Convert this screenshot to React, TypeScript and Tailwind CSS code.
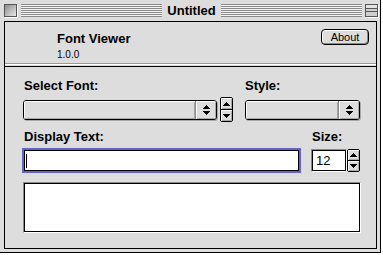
import React from "react";

const stripes =
  "bg-[repeating-linear-gradient(to_bottom,#8a8a8a_0px,#8a8a8a_1px,#f4f4f4_1px,#f4f4f4_2px)]";

const UpArrow = () => (
  <svg width="7" height="4" viewBox="0 0 7 4" shapeRendering="crispEdges">
    <path d="M3 0h1v1h-1zM2 1h3v1h-3zM1 2h5v1h-5zM0 3h7v1h-7z" fill="#000" />
  </svg>
);

const DownArrow = () => (
  <svg width="7" height="4" viewBox="0 0 7 4" shapeRendering="crispEdges">
    <path d="M0 0h7v1h-7zM1 1h5v1h-5zM2 2h3v1h-3zM3 3h1v1h-1z" fill="#000" />
  </svg>
);

const Popup = ({ width }: { width: string }) => (
  <div
    className={`${width} h-[20px] rounded-[3px] border border-black bg-[#dddddd] shadow-[1px_1px_0_#a8a8a8] flex overflow-hidden`}
  >
    <div className="flex-1 shadow-[inset_1px_1px_0_#ffffff,inset_-1px_-1px_0_#a8a8a8]" />
    <div className="w-[21px] border-l border-[#8a8a8a] flex flex-col items-center justify-center gap-[2px] shadow-[inset_1px_1px_0_#ffffff,inset_-1px_-1px_0_#a8a8a8]">
      <UpArrow />
      <DownArrow />
    </div>
  </div>
);

const Stepper = ({ height }: { height: string }) => (
  <div
    className={`w-[13px] ${height} border border-black rounded-[2px] bg-[#dddddd] flex flex-col overflow-hidden`}
  >
    <div className="flex-1 border-b border-black flex items-center justify-center shadow-[inset_1px_1px_0_#ffffff,inset_-1px_-1px_0_#a8a8a8]">
      <UpArrow />
    </div>
    <div className="flex-1 flex items-center justify-center shadow-[inset_1px_1px_0_#ffffff,inset_-1px_-1px_0_#a8a8a8]">
      <DownArrow />
    </div>
  </div>
);

export default function App() {
  return (
    <div className="w-[383px] h-[255px] bg-white text-black font-['Liberation_Sans',Arial,sans-serif]">
      <div className="w-[381px] h-[253px] bg-[#dddddd] border-r border-b border-black flex flex-col">
        {/* title bar */}
        <div className="h-[21px] shrink-0 flex items-center pl-[4px] pr-[2px]">
          <div className="w-[13px] h-[13px] border border-[#555555] shadow-[1px_1px_0_#ffffff] bg-[linear-gradient(135deg,#8c8c8c,#e8e8e8)]" />
          <div className={`flex-1 h-[13px] ml-[4px] ${stripes}`} />
          <span className="px-[5px] text-[13px] font-bold leading-[13px]">
            Untitled
          </span>
          <div className={`flex-1 h-[13px] mr-[3px] ${stripes}`} />
          <div className="w-[13px] h-[13px] border border-[#555555] shadow-[1px_1px_0_#ffffff] bg-[#cfcfcf] flex flex-col">
            <div className="h-[4px] border-b border-[#555555] bg-[#e4e4e4]" />
            <div className="h-[3px] border-b border-[#555555]" />
          </div>
        </div>

        {/* content */}
        <div className="flex-1 ml-[4px] mr-[3px] mb-[3px] border border-black flex flex-col">
          <div className="h-[42px] shrink-0 border-b border-[#9a9a9a] flex items-start justify-between pl-[52px] pr-[7px] pt-[7px]">
            <div className="mt-[2px]">
              <div className="text-[13px] font-bold leading-[15px]">
                Font Viewer
              </div>
              <div className="mt-[3px] text-[10px] leading-[12px]">1.0.0</div>
            </div>
            <button className="w-[48px] h-[16px] rounded-[4px] border border-black bg-[#dddddd] shadow-[inset_1px_1px_0_#ffffff,inset_-1px_-1px_0_#8a8a8a] text-[11px] leading-[14px]">
              About
            </button>
          </div>
          <div className="h-px bg-white shrink-0" />
          <div className="h-px shrink-0" />
          <div className="h-px bg-black shrink-0" />

          <div className="flex-1 pl-[18px] pt-[11px]">
            {/* font + style row */}
            <div className="flex">
              <div>
                <div className="ml-[1px] text-[13px] font-bold leading-[15px]">
                  Select Font:
                </div>
                <div className="mt-[4px] h-[25px] flex items-center gap-[3px]">
                  <Popup width="w-[194px]" />
                  <Stepper height="h-[25px]" />
                </div>
              </div>
              <div className="ml-[12px]">
                <div className="text-[13px] font-bold leading-[15px]">
                  Style:
                </div>
                <div className="mt-[4px] h-[25px] flex items-center">
                  <Popup width="w-[115px]" />
                </div>
              </div>
            </div>

            {/* display text + size row */}
            <div className="mt-[7px] flex">
              <div>
                <div className="ml-[1px] text-[13px] font-bold leading-[15px]">
                  Display Text:
                </div>
                <div className="mt-[6px] ml-[1px] w-[275px] h-[21px] bg-white border border-black outline-2 outline-solid outline-[#6464c8] flex items-center">
                  <div className="ml-[1px] w-px h-[14px] bg-black" />
                </div>
              </div>
              <div className="ml-[12px]">
                <div className="ml-[1px] text-[13px] font-bold leading-[15px]">
                  Size:
                </div>
                <div className="mt-[5px] flex">
                  <div className="w-[36px] h-[23px] border-t border-l border-[#8a8a8a] border-b border-r border-b-white border-r-white">
                    <div className="w-full h-full bg-white border border-black flex items-center pl-[3px] text-[13px] leading-none">
                      12
                    </div>
                  </div>
                  <Stepper height="h-[23px]" />
                </div>
              </div>
            </div>

            {/* output */}
            <div className="mt-[10px] w-[338px] h-[51px] border-t border-l border-[#8a8a8a] border-b border-r border-b-white border-r-white">
              <div className="w-full h-full bg-white border border-black" />
            </div>
          </div>
        </div>
      </div>
    </div>
  );
}
